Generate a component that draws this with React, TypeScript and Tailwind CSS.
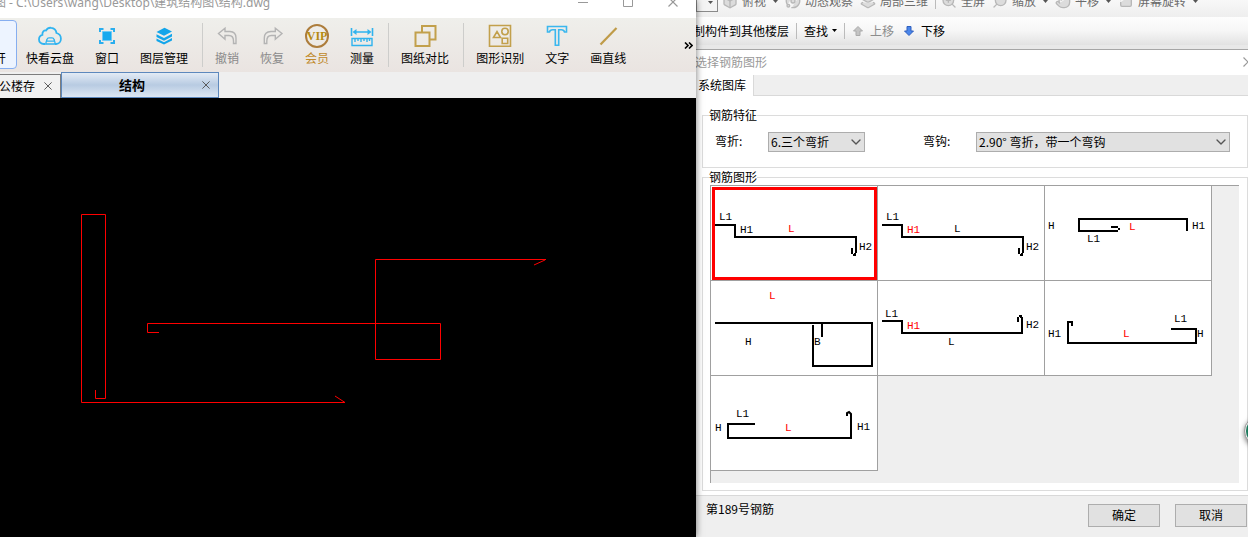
import { useState, type ReactNode } from 'react'
import { Box, ChevronDown, Hand, Layers2, Orbit, RotateCwSquare, Search, ZoomIn } from 'lucide-react'

type Label = { text: string; x: number; y: number; red?: boolean }
type Shape = { id: number; path: string; labels: Label[] }

// every shape is drawn in a 166x94 cell
const shapes: Shape[] = [
  {
    id: 1,
    path: 'M4 39H24V51H145V67M141 62V68M142 69H144V67',
    labels: [
      { text: 'L1', x: 8, y: 34 },
      { text: 'H1', x: 29, y: 47 },
      { text: 'L', x: 77, y: 46, red: true },
      { text: 'H2', x: 148, y: 64 },
    ],
  },
  {
    id: 2,
    path: 'M4 39H24V51H145V67M141 62V68M142 69H144V67',
    labels: [
      { text: 'L1', x: 8, y: 34 },
      { text: 'H1', x: 29, y: 47, red: true },
      { text: 'L', x: 76, y: 46 },
      { text: 'H2', x: 148, y: 64 },
    ],
  },
  {
    id: 3,
    path: 'M142 45V33H34V45H73M66 41H73M73 43H75',
    labels: [
      { text: 'H', x: 3, y: 43 },
      { text: 'H1', x: 147, y: 43 },
      { text: 'L', x: 84, y: 44, red: true },
      { text: 'L1', x: 42, y: 56 },
    ],
  },
  {
    id: 4,
    path: 'M4 42H161V85H102V44M111 42V56',
    labels: [
      { text: 'L', x: 58, y: 18, red: true },
      { text: 'H', x: 34, y: 64 },
      { text: 'B', x: 103, y: 64 },
    ],
  },
  {
    id: 5,
    path: 'M4 40H24V52H144V36M140 41V36M141 35H143V37',
    labels: [
      { text: 'L1', x: 7, y: 36 },
      { text: 'H1', x: 29, y: 48, red: true },
      { text: 'L', x: 70, y: 64 },
      { text: 'H2', x: 148, y: 47 },
    ],
  },
  {
    id: 6,
    path: 'M27 45V41H23V62H151V48H126',
    labels: [
      { text: 'H1', x: 3, y: 56 },
      { text: 'L', x: 78, y: 56, red: true },
      { text: 'L1', x: 129, y: 41 },
      { text: 'H', x: 152, y: 56 },
    ],
  },
  {
    id: 7,
    path: 'M44 48H17V62H140V38L138 36L136 37V40',
    labels: [
      { text: 'H', x: 4, y: 55 },
      { text: 'L1', x: 25, y: 41 },
      { text: 'L', x: 74, y: 55, red: true },
      { text: 'H1', x: 146, y: 54 },
    ],
  },
]

function ToolIcon({ color, children }: { color: string; children: ReactNode }) {
  return (
    <svg width="24" height="24" viewBox="0 0 24 24" fill="none" stroke={color} strokeWidth="2" aria-hidden="true">
      {children}
    </svg>
  )
}

function Tool({ label, className = '', children }: { label: string; className?: string; children: ReactNode }) {
  return (
    <button className={`flex flex-col items-center gap-[2px] px-[10px] text-xs leading-4 whitespace-nowrap ${className}`}>
      {children}
      {label}
    </button>
  )
}

function ToolDivider() {
  return <div className="ml-[3px] mr-px -mt-px h-11 w-px bg-[#cdcdcb]" />
}

function Caret() {
  return (
    <svg width="5" height="3" viewBox="0 0 5 3" className="shrink-0" aria-hidden="true">
      <path d="M0 0H5L2.5 3Z" fill="currentColor" />
    </svg>
  )
}

function CloseIcon({ size = 10 }: { size?: number }) {
  return (
    <svg width={size} height={size} viewBox="0 0 10 10" stroke="currentColor" strokeWidth="1.2" fill="none" aria-hidden="true">
      <path d="M0.5 0.5L9.5 9.5M9.5 0.5L0.5 9.5" />
    </svg>
  )
}

function ViewTool({ label, icon }: { label: string; icon: ReactNode }) {
  return (
    <button className="flex items-center gap-1 text-[#6b6b6b] whitespace-nowrap">
      <span className="fill-[#dcdcdc] text-[#b8b8b8]">{icon}</span>
      {label}
    </button>
  )
}

function CadWindow() {
  return (
    <section className="relative z-10 flex min-w-0 flex-1 flex-col bg-[#efefef] shadow-[0_0_7px_rgba(0,0,0,0.55)]">
      <header className="flex h-[18px] items-end justify-between bg-white text-[#999]">
        <div className="-ml-[6px] pb-[7px] font-['Noto_Sans','Noto_Sans_CJK_SC',sans-serif] text-xs leading-4 whitespace-nowrap">
          图 - C:\Users\wang\Desktop\建筑结构图\结构.dwg
        </div>
        <div className="flex items-end pr-px pb-[11px]">
          <button aria-label="最小化" className="flex w-[45px] justify-center">
            <svg width="10" height="10" viewBox="0 0 10 10" stroke="currentColor"><path d="M0 5.5H10" /></svg>
          </button>
          <button aria-label="最大化" className="flex w-[45px] justify-center">
            <svg width="10" height="10" viewBox="0 0 10 10" stroke="currentColor" fill="none"><path d="M0.5 0.5H9.5V9.5H0.5Z" /></svg>
          </button>
          <button aria-label="关闭" className="flex w-[45px] justify-center"><CloseIcon /></button>
        </div>
      </header>

      <nav className="flex h-[54px] bg-linear-to-b from-[#efefeb] to-[#eae4e1]">
        <button className="-ml-12 mt-[2px] flex h-[49px] w-[65px] items-end justify-end rounded-[4px] border border-[#86aef0] bg-[#edf4ff] pr-[10px] pb-[2px] text-xs leading-4">
          打开
        </button>
        <div className="-ml-px flex min-w-0 flex-1 gap-px overflow-hidden pt-[6px]">
          <Tool label="快看云盘">
            <ToolIcon color="#2fb3f0">
              <path d="M7.5 20H5.8C2.9 20 1 18 1 15.4c0-2.4 1.5-4 3.4-4.5C4.100 7.500 6 6.200 8 6.500 9.300 4.400 11.300 3.500 13.200 3.800c2.900.2 4.800 2 5.300 5.200 2.600.7 4.400 3 4.400 5.700 0 3-2 5.300-4.700 5.300H17" strokeWidth="1.800" />
              <path d="M8 18.500l1-3.200Q9.400 13.800 11 13.800h3q1.600 0 2 1.500l1 3.200V20H8ZM9 17.200h7" strokeWidth="1.300" />
            </ToolIcon>
          </Tool>
          <Tool label="窗口">
            <ToolIcon color="#2aaeee">
              <path d="M5 8V5H8.500M15.500 5H19V8M19 16v3H15.500M8.500 19H5V16" />
              <path d="M7.500 7.500h9v9h-9Z" fill="#16a9ee" stroke="#6ccaf5" strokeWidth="1" />
            </ToolIcon>
          </Tool>
          <Tool label="图层管理">
            <ToolIcon color="none">
              <path d="M4.500 8L12.500 3.800 20 7.500 12 11.800Z" fill="#12a5ea" />
              <path d="M4.500 10.300L12 14 20 9.800V12.500L12 16.700 4.500 13ZM4.500 14.500L12 18.200 20 14V16.500L12 20.500 4.500 17Z" fill="#12a5ea" />
            </ToolIcon>
          </Tool>
          <ToolDivider />
          <Tool label="撤销" className="text-[#8a8a8a]">
            <ToolIcon color="#b4b4b4">
              <path d="M3.500 9.500L10 4.200V7.500H15Q21 7.800 21 14V19.500H18.500V17Q18.500 11.500 14 11.500H10V15.200Z" strokeWidth="1.400" />
            </ToolIcon>
          </Tool>
          <Tool label="恢复" className="text-[#8a8a8a]">
            <ToolIcon color="#b4b4b4">
              <path d="M22 9.500L15.300 4.200V7.500H11Q4.300 7.800 4.300 14V19.500H6.800V17Q6.800 11.500 11.300 11.500H15.300V15.200Z" strokeWidth="1.400" />
            </ToolIcon>
          </Tool>
          <Tool label="会员" className="text-[#c08a2c]">
            <span className="flex size-6 items-center justify-center rounded-full border-2 border-[#ad7d3c] font-['Liberation_Serif',serif] text-xs leading-4 font-bold text-[#b58a10]">
              VIP
            </span>
          </Tool>
          <Tool label="测量">
            <ToolIcon color="#2fb3ee">
              <path d="M1.500 4V12M22.500 4V12M4 8H20" strokeWidth="1.600" />
              <path d="M2.500 8L6.500 5V11ZM21.500 8L17.500 5V11Z" fill="#2fb3ee" stroke="none" />
              <path d="M2 14.500H22V21.500H2ZM5 15V18M8 15V17M11 15V18M14 15V17M17 15V18M19.500 15V17" strokeWidth="1.400" />
            </ToolIcon>
          </Tool>
          <ToolDivider />
          <Tool label="图纸对比">
            <ToolIcon color="#c2a04c">
              <path d="M9 8V2H22.500V15.500H17M2.500 8.500H16.500V22H2.500Z" />
            </ToolIcon>
          </Tool>
          <ToolDivider />
          <Tool label="图形识别">
            <ToolIcon color="#c2a04c">
              <path d="M1.500 1.500H22.500V22.300H1.500ZM5.500 13.500L9 7.500 12.500 13.500ZM14.200 14.300H19.700V19.500H14.200Z" strokeWidth="1.600" />
              <circle cx="17" cy="7.500" r="3.200" strokeWidth="1.600" />
            </ToolIcon>
          </Tool>
          <Tool label="文字">
            <ToolIcon color="#3bb7ee">
              <path d="M2.500 2.500H21.500V8H19.500Q19 5.800 16.500 5.800H13.700V21.200H10.300V5.800H7.500Q5 5.800 4.500 8H2.500Z" strokeWidth="1.600" />
            </ToolIcon>
          </Tool>
          <Tool label="画直线">
            <ToolIcon color="#bf9b48">
              <path d="M4.500 20.500L20.500 4" strokeWidth="2.200" />
            </ToolIcon>
          </Tool>
        </div>
        <button aria-label="更多" className="w-4">
          <svg width="9" height="7" viewBox="0 0 9 7" fill="none" stroke="#000" strokeWidth="1.600" className="mx-auto"><path d="M1 .5L4 3.500 1 6.500M5 .5L8 3.500 5 6.500" /></svg>
        </button>
      </nav>

      <div className="flex h-[26px] items-end text-xs leading-4">
        <div className="flex h-6 w-[61px] items-center justify-end gap-[9px] border-t border-r border-[#7d7d7d] bg-[#f1f1f1] pr-2 pb-[2px]">
          <span className="shrink-0 whitespace-nowrap">公楼存</span>
          <button aria-label="关闭 公楼存" className="text-[#555]"><CloseIcon size={8} /></button>
        </div>
        <div className="flex h-[26px] w-[158px] items-center border border-[#5d88bd] bg-linear-to-b from-[#e3ebf5] via-[#b8cbe2] to-[#dde7f3] pr-2">
          <span className="flex-1 text-center text-[13px] font-bold">结构</span>
          <button aria-label="关闭 结构" className="text-[#555]"><CloseIcon size={8} /></button>
        </div>
      </div>

      <main className="flex-1 overflow-hidden bg-black">
        <svg width="696" height="439" viewBox="0 98 696 439" fill="none" stroke="#f00" className="block">
          <path d="M95.500 390V398.500H105.500V214.500H81.500V402.500H345M345 402.500L335 396" />
          <path d="M159 332.500H147.500V323.500H440.500V359.500H375.500V259.500H546M545 260L534 265" />
        </svg>
      </main>
    </section>
  )
}

function Combo({ id, options, className }: { id: string; options: string[]; className: string }) {
  return (
    <div className={`relative ${className}`}>
      <select
        id={id}
        className="block h-5 w-full appearance-none border border-[#adadad] bg-[#e1e1e1] pr-5 pl-[2px] text-xs leading-4"
      >
        {options.map((o) => <option key={o}>{o}</option>)}
      </select>
      <ChevronDown size={16} strokeWidth={2} className="pointer-events-none absolute top-[2px] right-px text-[#555]" />
    </div>
  )
}

function ShapeCell({ shape, selected, onSelect }: { shape: Shape; selected: boolean; onSelect: () => void }) {
  return (
    <button
      onClick={onSelect}
      aria-pressed={selected}
      className="relative h-[95px] w-[167px] border-r border-b border-[#a0a0a0] bg-white"
    >
      <svg width="166" height="94" viewBox="0 0 166 94" className="block">
        <path d={shape.path} fill="none" stroke="#000" strokeWidth="2" />
        {shape.labels.map((l) => (
          <text
            key={l.text}
            x={l.x}
            y={l.y}
            fill={l.red ? '#f00' : '#000'}
            className="font-['Liberation_Mono',monospace] text-[11px]"
          >
            {l.text}
          </text>
        ))}
      </svg>
      {selected && <span className="absolute top-px right-0 bottom-0 left-px border-3 border-[#f00]" />}
    </button>
  )
}

function RebarDialog() {
  const [selected, setSelected] = useState(1)

  return (
    <section className="relative flex w-[552px] shrink-0 flex-col overflow-hidden bg-white text-xs leading-4">
      <div className="flex h-[17px] items-end bg-linear-to-b from-[#f8f8f8] to-[#eee]">
        <button aria-label="视图" className="mb-[5px] flex h-5 w-[22px] items-center justify-end border border-[#8a8a8a] bg-[#f4f4f4] pr-1 text-[#555]">
          <Caret />
        </button>
        <div className="ml-1 flex items-center gap-[7px] pb-2 text-[#555]">
          <ViewTool label="俯视" icon={<Box size={16} className="fill-inherit" />} />
          <Caret />
          <ViewTool label="动态观察" icon={<Orbit size={16} className="fill-inherit" />} />
          <ViewTool label="局部三维" icon={<Layers2 size={16} className="fill-inherit" />} />
          <div className="-mr-[2px] h-4 w-px bg-[#bbb]" />
          <ViewTool label="全屏" icon={<ZoomIn size={16} className="fill-inherit" />} />
          <ViewTool label="缩放" icon={<Search size={16} className="-scale-x-100 fill-inherit" />} />
          <Caret />
          <ViewTool label="平移" icon={<Hand size={16} className="fill-inherit" />} />
          <Caret />
          <ViewTool label="屏幕旋转" icon={<RotateCwSquare size={16} className="fill-inherit" />} />
          <Caret />
        </div>
      </div>

      <div className="flex h-7 items-center bg-linear-to-b from-[#fdfdfd] via-[#f6f6f6] to-[#e2e2e2] pb-px whitespace-nowrap">
        <button className="-ml-[3px]">制构件到其他楼层</button>
        <div className="mx-[7px] h-4 w-px bg-[#bbb]" />
        <button className="flex items-center gap-1">查找<Caret /></button>
        <div className="mx-[7px] h-4 w-px bg-[#bbb]" />
        <button className="ml-px flex items-center gap-[7px] text-[#8c8c8c]">
          <svg width="10" height="10" viewBox="0 0 10 10" aria-hidden="true"><path d="M5 .5L9.500 5H7V9.500H3V5H.5Z" fill="#c4c4c4" stroke="#aaa" /></svg>
          上移
        </button>
        <button className="ml-[10px] flex items-center gap-[7px]">
          <svg width="10" height="10" viewBox="0 0 10 10" aria-hidden="true"><path d="M5 9.500L9.500 5H7V.5H3V5H.5Z" fill="#4a86ea" stroke="#2e5fbe" /></svg>
          下移
        </button>
      </div>
      <div className="h-[5px] border-b border-[#a6a6a6] bg-[#e8e8e8]" />

      <header className="flex h-[25px] items-center justify-between pb-[2px] text-[#999]">
        <h1 className="-ml-px">选择钢筋图形</h1>
        <button aria-label="关闭" className="-mr-[5px]"><CloseIcon /></button>
      </header>

      <div role="tablist" className="flex h-[21px] border-b border-[#d9d9d9] bg-[#efefef]">
        <button role="tab" aria-selected="true" className="-mb-px w-[58px] border-r border-[#d9d9d9] bg-white pr-[7px] pb-px text-right whitespace-nowrap">
          系统图库
        </button>
      </div>

      <div className="flex flex-1 flex-col pt-[11px] pb-1 pl-[6px]">
        <fieldset className="min-w-0 border border-[#dcdcdc] px-[7px] pt-[9px] pb-[15px]">
          <legend className="-ml-px">钢筋特征</legend>
          <div className="flex items-center">
            <label htmlFor="bend" className="ml-[5px] w-[53px] pb-[2px]">弯折:</label>
            <Combo id="bend" className="w-[97px]" options={['6.三个弯折']} />
            <label htmlFor="hook" className="ml-[58px] w-[53px] pb-[2px]">弯钩:</label>
            <Combo id="hook" className="mr-[10px] flex-1" options={['2.90° 弯折，带一个弯钩']} />
          </div>
        </fieldset>

        <fieldset className="mt-px flex min-w-0 flex-1 flex-col border border-[#dcdcdc] pr-2 pb-[7px] pl-[7px]">
          <legend className="-ml-px">钢筋图形</legend>
          <div className="flex flex-1 flex-wrap content-start border-t border-l border-[#a0a0a0] bg-[#efefef]">
            {shapes.map((s) => (
              <ShapeCell key={s.id} shape={s} selected={s.id === selected} onSelect={() => setSelected(s.id)} />
            ))}
          </div>
        </fieldset>
      </div>

      <footer className="flex h-[42px] items-start border-t border-[#d9d9d9] bg-[#efefef] pt-2 pr-px pl-[10px]">
        <span className="-mt-[3px] flex-1">第{188 + selected}号钢筋</span>
        <button className="h-[23px] w-[72px] border border-[#adadad] bg-[#e1e1e1] pb-px">确定</button>
        <button className="ml-[15px] h-[23px] w-[72px] border border-[#adadad] bg-[#e1e1e1] pb-px">取消</button>
      </footer>

      {/* floating assistant ball, docked half off screen */}
      <div className="absolute top-[416px] -right-[26px] size-[30px] rounded-full border border-[#999] bg-[#eee] p-px shadow-[0_2px_5px_rgba(0,0,0,0.5)]">
        <div className="size-full rounded-full bg-[#1c7a5c]" />
      </div>
    </section>
  )
}

export default function App() {
  return (
    <div className="flex min-h-screen overflow-hidden bg-white font-['Noto_Sans_CJK_SC',sans-serif] text-black">
      <CadWindow />
      <RebarDialog />
    </div>
  )
}
